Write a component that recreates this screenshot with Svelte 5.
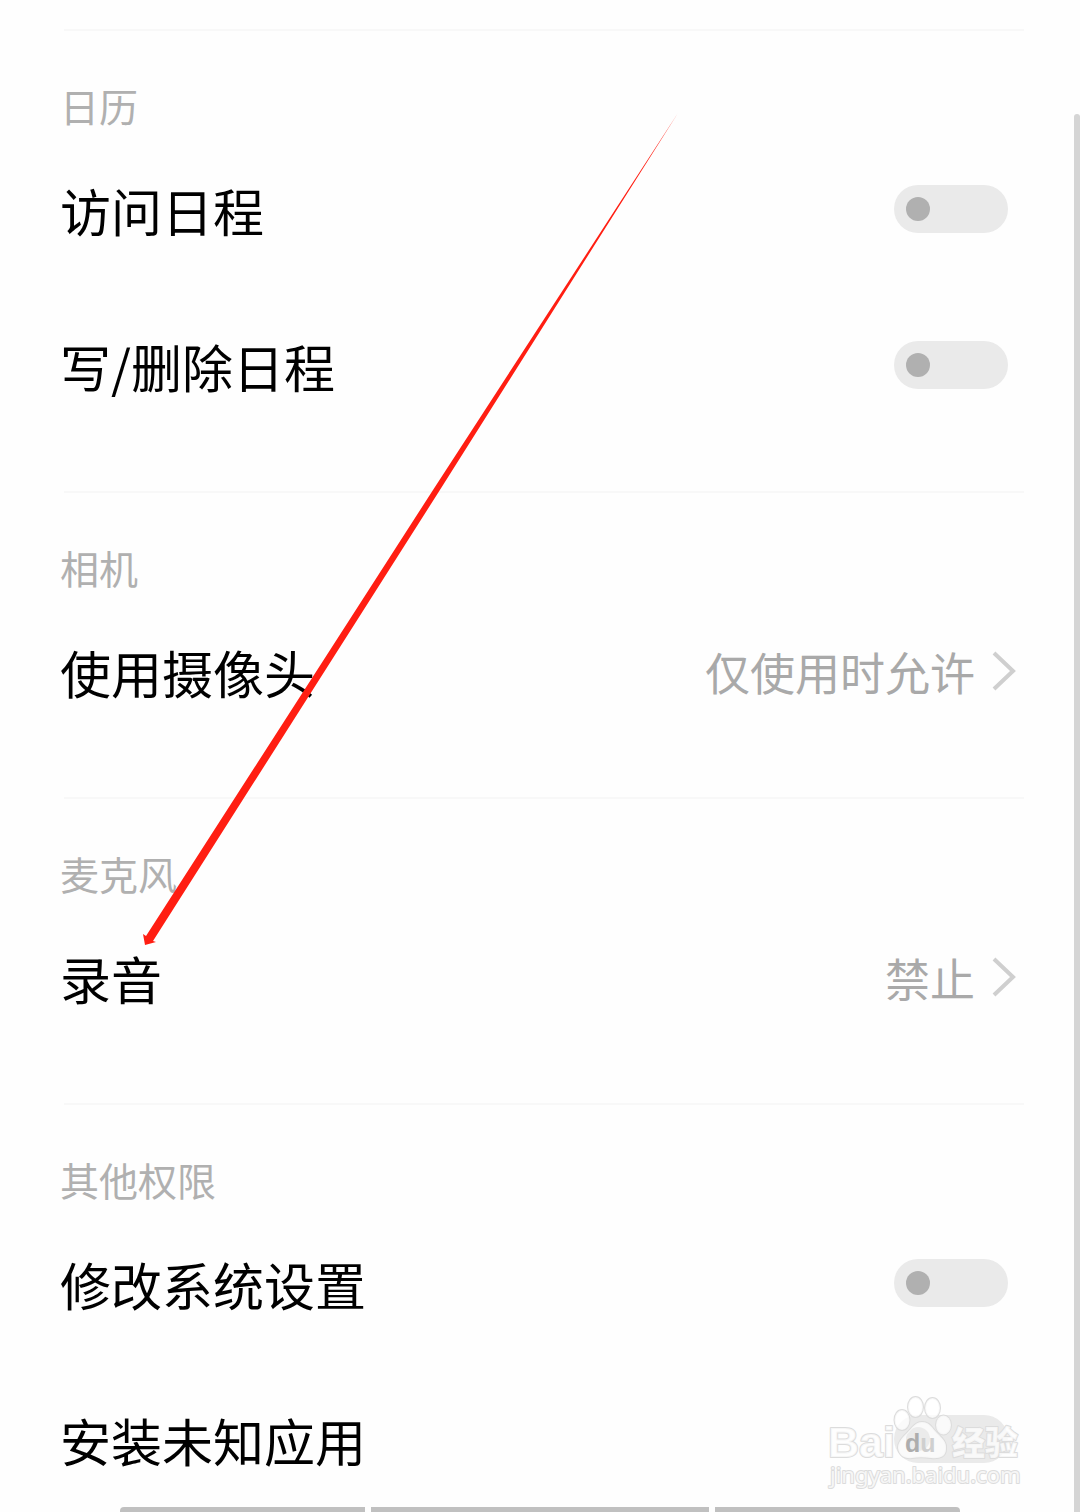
<script>
  let sections = $state([
    {
      title: '日历',
      items: [
        { id: 'calendar-read', name: '访问日程', on: false },
        { id: 'calendar-write', name: '写/删除日程', on: false }
      ]
    },
    {
      title: '相机',
      items: [{ id: 'camera', name: '使用摄像头', value: '仅使用时允许' }]
    },
    {
      title: '麦克风',
      items: [{ id: 'record', name: '录音', value: '禁止' }]
    },
    {
      title: '其他权限',
      items: [
        { id: 'system', name: '修改系统设置', on: false },
        { id: 'unknown-apps', name: '安装未知应用', on: false }
      ]
    }
  ]);
</script>

<div class="screen">
  <main class="list">
    {#each sections as section}
      <section class="group">
        <h2 class="title">{section.title}</h2>
        {#each section.items as item (item.id)}
          {#if item.value}
            <button class="row" type="button">
              <span class="name">{item.name}</span>
              <span class="value">{item.value}</span>
              <svg class="chevron" viewBox="0 0 24 40" aria-hidden="true">
                <path d="M2 2 L21 20 L2 38" />
              </svg>
            </button>
          {:else}
            <label class="row" for={item.id}>
              <span class="name">{item.name}</span>
              <input class="switch" id={item.id} type="checkbox" role="switch" bind:checked={item.on} />
            </label>
          {/if}
        {/each}
      </section>
    {/each}
  </main>

  <div class="scrollbar"></div>

  <div class="navbar">
    <span></span>
    <span class="mid"></span>
    <span></span>
  </div>

  <!-- pointer to the recording permission -->
  <svg class="arrow" viewBox="0 0 540 840" aria-hidden="true">
    <path d="M538 3 L293 380 L6 826 L3 824 L5 835 L16 832 L13 831 L298 383 Z" />
  </svg>

  <svg class="watermark" viewBox="0 0 200 96" role="img" aria-label="Baidu 经验">
    <g class="mark">
      <text class="brand" x="3" y="61">Bai</text>
      <ellipse cx="77" cy="24" rx="7.5" ry="10" />
      <ellipse cx="90.5" cy="11" rx="7.5" ry="10" />
      <ellipse cx="107.5" cy="12" rx="7.5" ry="10" />
      <ellipse cx="118.5" cy="29" rx="7.5" ry="9.5" />
      <path d="M97 26 C90 26 87 32 82 37 C77 42 73 46 73 52 C74 60 80 63 87 62 C93 61 99 61 106 62 C114 63 121 61 121 53 C122 46 117 42 112 37 C107 32 105 26 97 26 Z" />
      <text class="cn" x="127" y="59">经验</text>
      <text class="url" x="5" y="87">jingyan.baidu.com</text>
    </g>
    <text class="du" x="80" y="56">d<tspan class="u">u</tspan></text>
  </svg>
</div>

<style>
  :global(body) {
    margin: 0;
    background: #fefefe;
  }
  .screen {
    position: relative;
    height: 100vh;
    overflow: hidden;
    background: #fefefe;
    font-family: 'Noto Sans CJK SC', 'Noto Sans', sans-serif;
    color: #000;
  }
  .list {
    padding-top: 29px;
  }
  .group {
    padding: 0 56px 48px 60px;
  }
  .group::before {
    content: '';
    display: block;
    height: 2px;
    margin-left: 4px;
    background: #f8f8f8;
  }
  .title {
    margin: 0;
    height: 100px;
    padding-top: 46px;
    box-sizing: border-box;
    font-size: 39px;
    font-weight: 400;
    line-height: 56px;
    color: #b0b0b0;
  }
  .row {
    display: flex;
    align-items: center;
    width: 100%;
    height: 156px;
    padding: 0 8px 0 0;
    box-sizing: border-box;
    border: 0;
    background: none;
    font: inherit;
    color: inherit;
    text-align: left;
    cursor: pointer;
  }
  .name {
    flex: 1;
    padding-top: 2px;
    font-size: 51px;
    line-height: 64px;
  }
  .value {
    padding-top: 2px;
    font-size: 45px;
    line-height: 64px;
    color: #a9a9a9;
  }
  .chevron {
    width: 24px;
    height: 40px;
    margin-left: 17px;
    fill: none;
    stroke: #cfcfcf;
    stroke-width: 4;
  }
  .switch {
    appearance: none;
    display: flex;
    align-items: center;
    width: 114px;
    height: 48px;
    margin: 0 8px 0 0;
    padding: 0 12px;
    box-sizing: border-box;
    border-radius: 24px;
    background: #eaeaea;
    cursor: pointer;
  }
  .switch::before {
    content: '';
    width: 24px;
    height: 24px;
    border-radius: 50%;
    background: #b0b0b0;
  }
  .switch:checked {
    justify-content: flex-end;
    background: #456fff;
  }
  .switch:checked::before {
    background: #fff;
  }
  .scrollbar {
    position: absolute;
    top: 114px;
    right: 0;
    bottom: 0;
    width: 6px;
    border-radius: 3px 3px 0 0;
    background: #d5d5d5;
  }
  .navbar {
    position: absolute;
    left: 120px;
    right: 120px;
    bottom: 0;
    display: flex;
    gap: 6px;
    height: 5px;
    overflow: hidden;
    border-radius: 4px 4px 0 0;
  }
  .navbar span {
    flex: 245;
    background: #c0c0c0;
  }
  .navbar .mid {
    flex: 338;
  }
  .arrow {
    position: absolute;
    top: 110px;
    left: 140px;
    width: 540px;
    height: 840px;
    fill: #ff1e12;
    pointer-events: none;
  }
  .watermark {
    position: absolute;
    right: 55px;
    bottom: 20px;
    width: 200px;
    height: 96px;
    pointer-events: none;
  }
  .mark {
    fill: #fff;
    fill-opacity: 0.75;
    stroke: #dcdcdc;
    stroke-width: 2;
    paint-order: stroke;
    stroke-linejoin: round;
  }
  .brand {
    font: 700 43px 'Liberation Sans', sans-serif;
  }
  .cn {
    font: 900 33px 'Noto Sans CJK SC', sans-serif;
  }
  .url {
    font: 400 22px 'Noto Sans', sans-serif;
  }
  .du {
    font: 700 25px 'Liberation Sans', sans-serif;
    fill: #adadad;
  }
  .u {
    fill: #cfcfcf;
  }
</style>
